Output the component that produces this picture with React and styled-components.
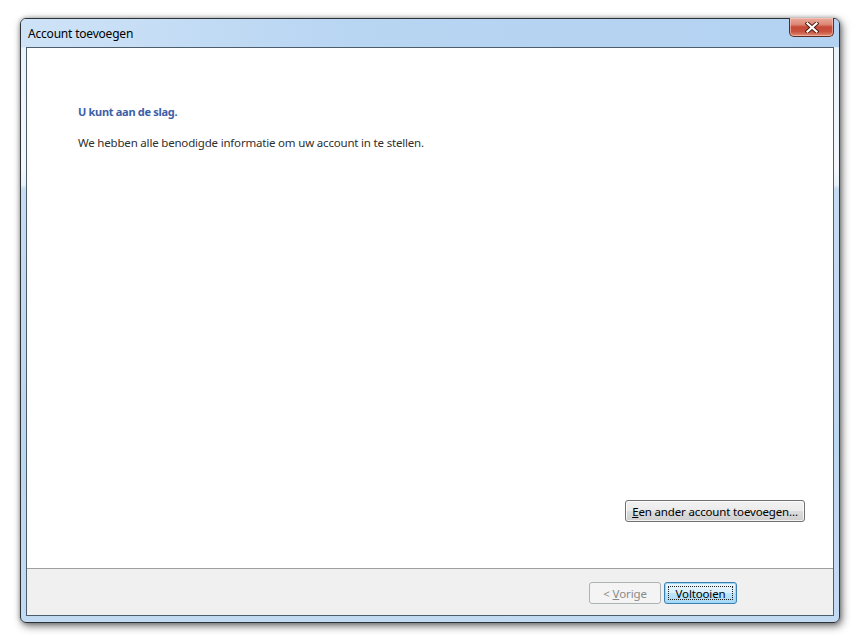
import React from "react";
import styled, { createGlobalStyle } from "styled-components";

const Global = createGlobalStyle`
  html, body { margin: 0; padding: 0; background: #ffffff; }
  body { font-family: "Noto Sans", "Open Sans", sans-serif; font-size: 12px; }
`;

const Page = styled.div`
  width: 867px;
  height: 642px;
  box-sizing: border-box;
  padding: 18px 27px 19px 20px;
  display: flex;
`;

const Window = styled.div`
  flex: 1;
  display: flex;
  flex-direction: column;
  border: 1px solid #2b3238;
  border-radius: 6px;
  padding: 0 5px 6px 5px;
  background: linear-gradient(
    180deg,
    #c9e0f6 0px,
    #b9d5f1 27px,
    #eaf2fa 29px,
    #f3f7fc 150px,
    #e8f0f9 166px,
    #c5dcf2 170px,
    #bdd6ef 70%,
    #c3dbf2 100%
  );
  box-shadow: 2px 3px 9px rgba(0, 0, 0, 0.55), 0 0 4px rgba(0, 0, 0, 0.3);
`;

const TitleBar = styled.div`
  height: 28px;
  display: flex;
  align-items: flex-start;
  justify-content: space-between;
  background: linear-gradient(90deg, #cfe3f7 0%, #b8d5f2 40%, #b3d2f1 100%);
  margin: 0 -5px;
  padding: 0 5px 0 7px;
  border-radius: 5px 5px 0 0;
`;

const Title = styled.span`
  margin-top: 6px;
  font-size: 12px;
  color: #000;
  font-family: "Noto Sans", sans-serif;
  letter-spacing: -0.2px;
`;

const CloseButton = styled.div`
  width: 45px;
  height: 19px;
  margin-top: -1px;
  box-sizing: border-box;
  border: 1px solid #5b2a22;
  border-top: none;
  border-radius: 0 0 5px 5px;
  background: linear-gradient(
    180deg,
    #e9a99a 0%,
    #dd8a78 35%,
    #c44a36 50%,
    #c9523e 75%,
    #e08c72 100%
  );
  box-shadow: inset 0 0 0 1px rgba(255, 210, 200, 0.55);
  display: flex;
  align-items: center;
  justify-content: center;
`;

const Client = styled.div`
  flex: 1;
  display: flex;
  flex-direction: column;
  border: 1px solid #4e5d6c;
  background: #ffffff;
`;

const Content = styled.div`
  flex: 1;
  display: flex;
  flex-direction: column;
  padding: 56px 28px 46px 51px;
`;

const Heading = styled.div`
  font-family: "Noto Sans", sans-serif;
  font-weight: bold;
  font-size: 11px;
  color: #3b5ea8;
  letter-spacing: -0.3px;
`;

const Paragraph = styled.div`
  margin-top: 16px;
  font-family: "Noto Sans", sans-serif;
  font-size: 11.5px;
  color: #2f2f2f;
  letter-spacing: -0.19px;
`;

const Spacer = styled.div`
  flex: 1;
`;

const ActionRow = styled.div`
  display: flex;
  justify-content: flex-end;
`;

const Button = styled.button`
  height: 22px;
  width: ${(p) => p.$w || 73}px;
  padding: 0;
  box-sizing: border-box;
  font-family: "Noto Sans", sans-serif;
  font-size: 11.5px;
  letter-spacing: -0.15px;
  white-space: nowrap;
  color: ${(p) => (p.$disabled ? "#8a8a8a" : "#000")};
  border-radius: 3px;
  border: 1px solid
    ${(p) => (p.$default ? "#3c7fb1" : p.$disabled ? "#adb2b5" : "#707070")};
  background: ${(p) =>
    p.$disabled
      ? "#f4f4f4"
      : p.$default
      ? "linear-gradient(180deg, #eaf6fd 0%, #d9f0fc 49%, #bee6fd 50%, #a7d9f5 100%)"
      : "linear-gradient(180deg, #f2f2f2 0%, #ebebeb 49%, #dddddd 50%, #cfcfcf 100%)"};
  box-shadow: ${(p) =>
    p.$default
      ? "inset 0 0 0 1px #9fd8f6"
      : p.$disabled
      ? "none"
      : "inset 0 0 0 1px rgba(255,255,255,0.75)"};
  display: flex;
  align-items: center;
  justify-content: center;
  position: relative;
  cursor: default;
`;

const FocusRing = styled.span`
  position: absolute;
  inset: 3px;
  border: 1px dotted #222;
  pointer-events: none;
`;

const Footer = styled.div`
  height: 47px;
  border-top: 1px solid #a0a0a0;
  background: #f0f0f0;
  display: flex;
  justify-content: flex-end;
  align-items: flex-start;
  gap: 3px;
  padding: 13px 96px 0 0;
  box-sizing: border-box;
`;

const U = styled.span`
  text-decoration: underline;
`;

export default function App() {
  return (
    <>
      <Global />
      <Page>
        <Window>
          <TitleBar>
            <Title>Account toevoegen</Title>
            <CloseButton>
              <svg width="14" height="11" viewBox="0 0 14 11">
                <path
                  d="M2.5 1.5 L11.5 9.5 M11.5 1.5 L2.5 9.5"
                  stroke="#4a1a12"
                  strokeWidth="4"
                  strokeLinecap="square"
                />
                <path
                  d="M2.5 1.5 L11.5 9.5 M11.5 1.5 L2.5 9.5"
                  stroke="#ffffff"
                  strokeWidth="2.2"
                  strokeLinecap="square"
                />
              </svg>
            </CloseButton>
          </TitleBar>
          <Client>
            <Content>
              <Heading>U kunt aan de slag.</Heading>
              <Paragraph>
                We hebben alle benodigde informatie om uw account in te stellen.
              </Paragraph>
              <Spacer />
              <ActionRow>
                <Button $w={180}>
                  <U>E</U>en ander account toevoegen...
                </Button>
              </ActionRow>
            </Content>
            <Footer>
              <Button $disabled $w={72}>
                &lt;&nbsp;<U>V</U>orige
              </Button>
              <Button $default $w={73}>
                Voltooien
                <FocusRing />
              </Button>
            </Footer>
          </Client>
        </Window>
      </Page>
    </>
  );
}
